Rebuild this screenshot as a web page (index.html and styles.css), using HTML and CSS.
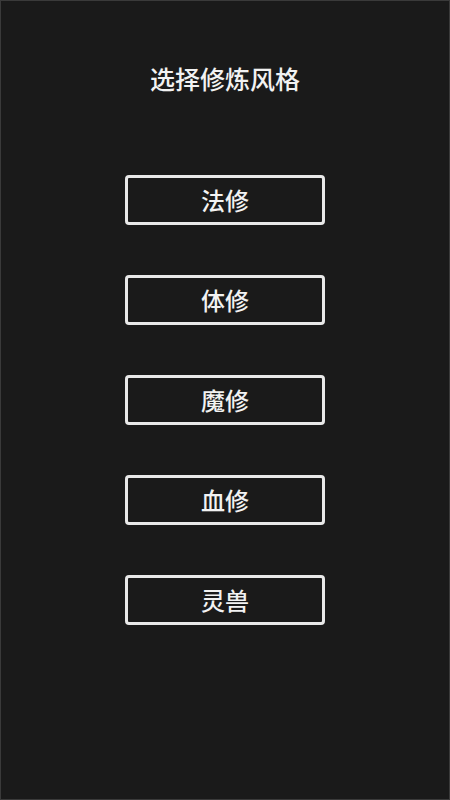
FILE: index.html
```html
<!DOCTYPE html>
<html lang="zh">
<head>
<meta charset="utf-8">
<link rel="stylesheet" href="styles.css">
</head>
<body>
<div class="screen">
  <h1 class="title">选择修炼风格</h1>
  <div class="options">
    <button class="opt">法修</button>
    <button class="opt">体修</button>
    <button class="opt">魔修</button>
    <button class="opt">血修</button>
    <button class="opt">灵兽</button>
  </div>
</div>
</body>
</html>
```
FILE: styles.css
```css
html, body {
  margin: 0;
  padding: 0;
  background: #1a1a1a;
}
.screen {
  box-sizing: border-box;
  width: 450px;
  height: 800px;
  border: 1px solid #3a3a3a;
  background: #1a1a1a;
  display: flex;
  flex-direction: column;
  align-items: center;
  font-family: "Noto Sans CJK SC", "Noto Sans", sans-serif;
  color: #f2f2f2;
}
.title {
  margin: 60px 0 0;
  height: 34px;
  line-height: 34px;
  font-size: 25px;
  font-weight: 500;
}
.options {
  margin-top: 80px;
  display: flex;
  flex-direction: column;
  gap: 50px;
}
.opt {
  box-sizing: border-box;
  width: 200px;
  height: 50px;
  background: #1a1a1a;
  border: 3px solid #e8e8e8;
  border-radius: 4px;
  color: #f2f2f2;
  font-family: "Noto Sans CJK SC", "Noto Sans", sans-serif;
  font-size: 24px;
  font-weight: 500;
  line-height: 1;
  padding: 0;
  display: flex;
  align-items: center;
  justify-content: center;
}
```
